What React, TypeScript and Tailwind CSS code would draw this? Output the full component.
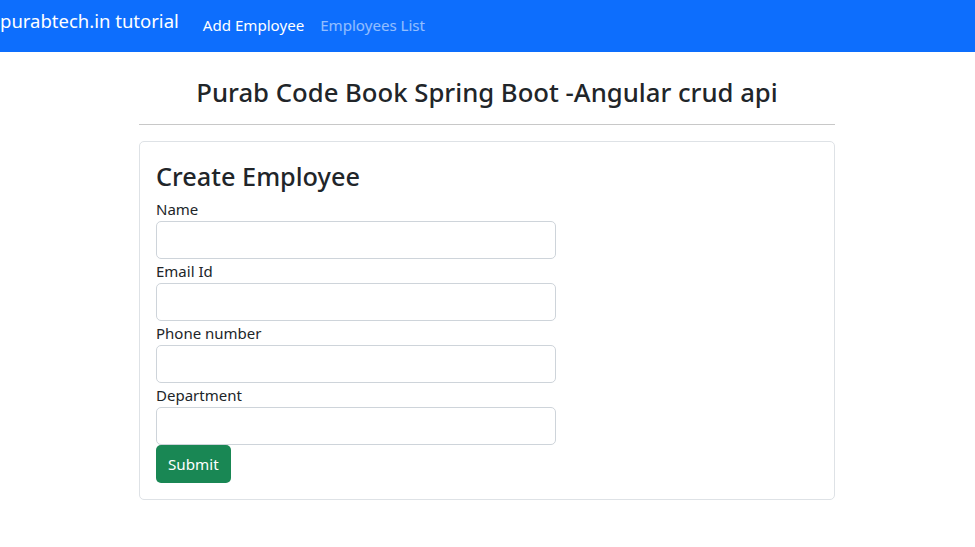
import React from 'react';

const fields = ['Name', 'Email Id', 'Phone number', 'Department'];

const App: React.FC = () => {
  return (
    <div className="min-h-screen bg-white text-[#212529] font-['Noto_Sans',sans-serif]">
      {/* Navbar */}
      <nav className="h-[52px] bg-[#0d6efd] flex items-start">
        <a className="text-white text-[18.5px] leading-[30px] mt-[6px] mr-[16px] whitespace-nowrap">purabtech.in tutorial</a>
        <ul className="flex mt-[13px]">
          <li>
            <a className="block px-2 text-white text-[15.1px] leading-[24px]">Add Employee</a>
          </li>
          <li>
            <a className="block px-2 text-white/55 text-[15.1px] leading-[24px]">Employees List</a>
          </li>
        </ul>
      </nav>

      <div className="w-[696px] ml-[139px]">
        <h3 className="mt-[25px] mb-2 text-center text-[25.7px] leading-[32px] font-medium">
          Purab Code Book Spring Boot -Angular crud api
        </h3>
        <hr className="mt-[15px] mb-4 border-t border-[#c8c8c8]" />

        {/* Card */}
        <div className="border border-[#dee2e6] rounded-[5px] p-4">
          <h2 className="text-[25.3px] leading-[36px] font-medium mb-[3px]">Create Employee</h2>
          <form className="flex flex-col">
            {fields.map(label => (
              <div key={label} className="flex flex-col">
                <label className="text-[15px] leading-[24px]">{label}</label>
                <input
                  type="text"
                  className="w-[400px] h-[38px] border border-[#ced4da] rounded-[5px] px-3 outline-none"
                />
              </div>
            ))}
            <button
              type="button"
              className="self-start h-[38px] px-3 bg-[#198754] text-white rounded-[5px] text-[15.2px]"
            >
              Submit
            </button>
          </form>
        </div>
      </div>
    </div>
  );
};

export default App;
